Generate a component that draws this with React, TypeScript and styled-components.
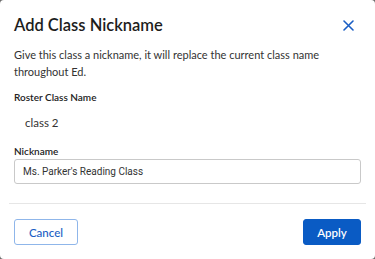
import React from "react";
import styled, { createGlobalStyle } from "styled-components";

const GlobalStyle = createGlobalStyle`
  html, body {
    margin: 0;
    padding: 0;
    background: #6b6b6b;
  }
  * {
    box-sizing: border-box;
  }
`;

const Modal = styled.div`
  width: 375px;
  height: 259px;
  background: #ffffff;
  border-radius: 4px;
  display: flex;
  flex-direction: column;
  font-family: Lato, "Liberation Sans", sans-serif;
  color: #222222;
`;

const Header = styled.div`
  display: flex;
  align-items: center;
  justify-content: space-between;
  padding: 12px 21px 0 14px;
  height: 38px;
`;

const Title = styled.h2`
  margin: 0;
  font-size: 16.5px;
  line-height: 26px;
  font-weight: 600;
  color: #1d1d1d;
`;

const CloseButton = styled.button`
  border: none;
  background: none;
  padding: 0;
  width: 11px;
  height: 11px;
  display: flex;
  cursor: pointer;
`;

const Body = styled.div`
  padding: 0 14px;
  display: flex;
  flex-direction: column;
`;

const Description = styled.p`
  margin: 8px 0 0;
  font-size: 11px;
  line-height: 17px;
  color: #333333;
`;

const Label = styled.div<{ $top: number }>`
  font-size: 10px;
  line-height: 12px;
  font-weight: 600;
  color: #222222;
  margin-top: ${(p) => p.$top}px;
`;

const StaticValue = styled.div`
  font-size: 11.5px;
  line-height: 15px;
  color: #333333;
  padding-left: 11px;
  margin-top: 12px;
`;

const Input = styled.input`
  margin-top: 2px;
  height: 25px;
  width: 100%;
  border: 1px solid #c9c9c9;
  border-radius: 3px;
  padding: 0 8px;
  font-family: Roboto, "Liberation Sans", sans-serif;
  font-size: 10px;
  color: #333333;
  outline: none;
`;

const Divider = styled.hr`
  margin: 19px 9px 0;
  border: none;
  border-top: 1px solid #e6e6e6;
`;

const Footer = styled.div`
  display: flex;
  justify-content: space-between;
  padding: 15px 14px 0;
`;

const Button = styled.button<{ $primary?: boolean }>`
  height: 26px;
  border-radius: 3px;
  font-family: Lato, "Liberation Sans", sans-serif;
  font-size: 11.5px;
  font-weight: ${(p) => (p.$primary ? 600 : 500)};
  padding: 0;
  width: ${(p) => (p.$primary ? 58 : 64)}px;
  cursor: pointer;
  background: ${(p) => (p.$primary ? "#0a5bc4" : "#ffffff")};
  color: ${(p) => (p.$primary ? "#ffffff" : "#1a5ec4")};
  border: 1px solid ${(p) => (p.$primary ? "#0a5bc4" : "#8fb6ea")};
`;

export default function App() {
  return (
    <>
      <GlobalStyle />
      <Modal>
        <Header>
          <Title>Add Class Nickname</Title>
          <CloseButton aria-label="Close">
            <svg width="11" height="11" viewBox="0 0 11 11">
              <path d="M1 1L10 10M10 1L1 10" stroke="#1a5ec4" strokeWidth="1.6" strokeLinecap="round" />
            </svg>
          </CloseButton>
        </Header>
        <Body>
          <Description>
            Give this class a nickname, it will replace the current class name throughout Ed.
          </Description>
          <Label $top={11}>Roster Class Name</Label>
          <StaticValue>class 2</StaticValue>
          <Label $top={15}>Nickname</Label>
          <Input defaultValue="Ms. Parker's Reading Class" />
        </Body>
        <Divider />
        <Footer>
          <Button>Cancel</Button>
          <Button $primary>Apply</Button>
        </Footer>
      </Modal>
    </>
  );
}
